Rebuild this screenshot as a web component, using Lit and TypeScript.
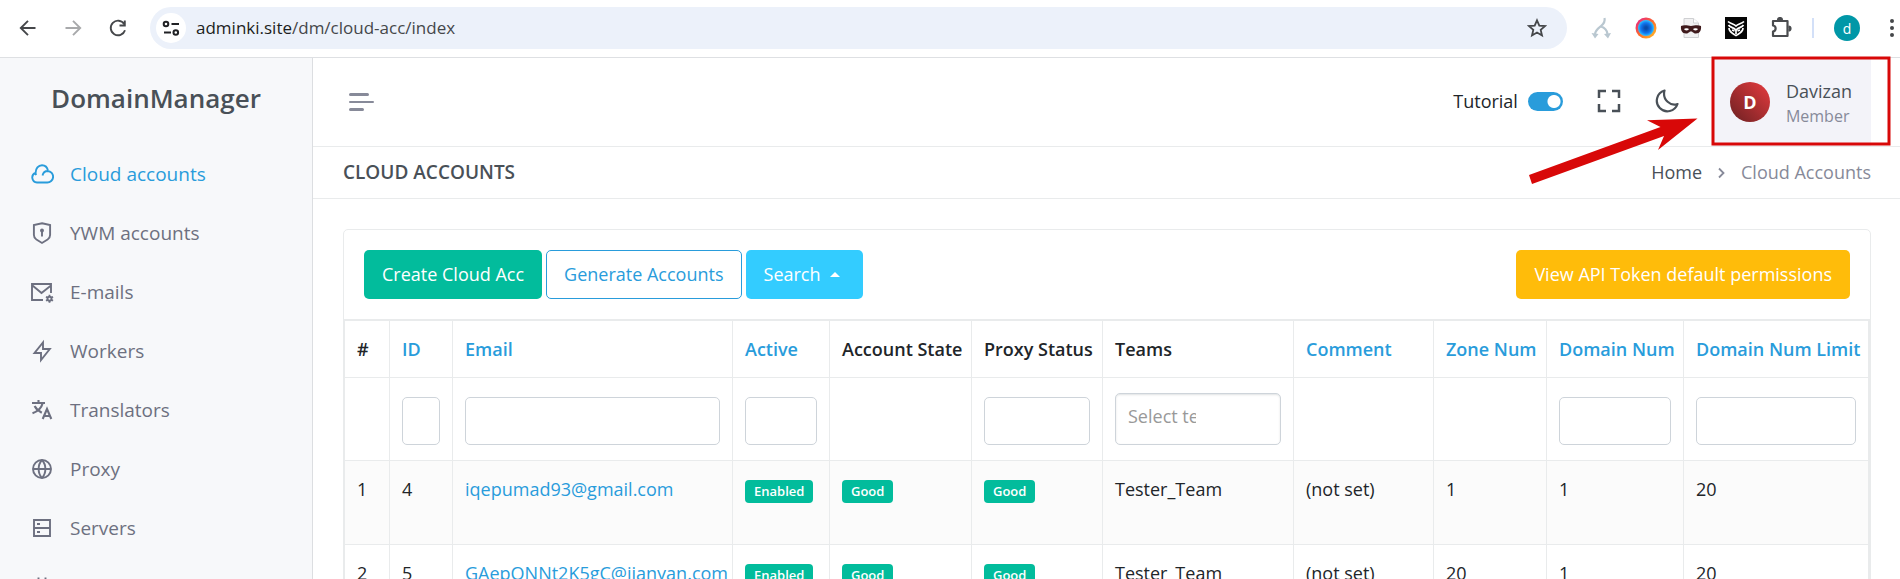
import { LitElement, html, css, svg } from "lit";
import { customElement } from "lit/decorators.js";

interface Column {
  label: string;
  width?: number;
  sortable?: boolean;
  filter?: "text" | "teams";
}

const COLUMNS: Column[] = [
  { label: "#", width: 45 },
  { label: "ID", width: 63, sortable: true, filter: "text" },
  { label: "Email", width: 280, sortable: true, filter: "text" },
  { label: "Active", width: 97, sortable: true, filter: "text" },
  { label: "Account State", width: 142 },
  { label: "Proxy Status", width: 131, filter: "text" },
  { label: "Teams", width: 191, filter: "teams" },
  { label: "Comment", width: 140, sortable: true },
  { label: "Zone Num", width: 113, sortable: true },
  { label: "Domain Num", width: 137, sortable: true, filter: "text" },
  { label: "Domain Num Limit", width: 185, sortable: true, filter: "text" },
  { label: "" },
];

const ROWS = [
  { n: 1, id: 4, email: "iqepumad93@gmail.com", team: "Tester_Team", comment: "(not set)", zones: 1, domains: 1, limit: 20 },
  { n: 2, id: 5, email: "GAepONNt2K5gC@jianyan.com", team: "Tester_Team", comment: "(not set)", zones: 20, domains: 1, limit: 20 },
];

const stroke = (body: unknown) => html`<svg class="icon" viewBox="0 0 24 24" width="24" height="24" fill="none" stroke="currentColor" stroke-width="1.900" aria-hidden="true">${body}</svg>`;

const MENU = [
  { label: "Cloud accounts", active: true, icon: svg`<path d="M12.500 13.500c.6-2.600 2.600-4.500 5.200-4.500A5.300 5.300 0 0 1 17 20.500H7A5 5 0 0 1 5.600 10.800C5.600 6.500 8.300 3.200 12 3.200c3 0 5.300 2 5.900 5.300M5.600 10.800c0 1 .1 1.500.5 2.300"/>` },
  { label: "YWM accounts", icon: svg`<path d="M12 2.200 20.100 4v10c0 2-1 3.500-2.500 4.500L12 22l-5.600-3.500C4.900 17.500 3.900 16 3.900 14V4z"/><path d="M12 9.500V15.500"/><circle cx="12" cy="9.500" r="1.200" fill="currentColor" stroke-width="1.500"/>` },
  { label: "E-mails", icon: svg`<path d="M13 20H2V4h19v9M2.500 5.500l9 7.500L21 5.500"/><circle cx="19.500" cy="18.800" r="2"/><path stroke-width="1.800" d="M19.500 14.800v2M19.500 20.800v2M16 16.800l1.700 1M21.300 19.800l1.700 1M16 20.800l1.700-1M21.300 17.800l1.700-1"/>` },
  { label: "Workers", icon: svg`<path d="M13 10h6.800L11 21v-7H4.500L13 3.500z"/>` },
  { label: "Translators", icon: svg`<path stroke-width="2.100" d="M2 5h13M8.500 2v3M12.700 5C11.500 10 7.500 13.500 2.500 15.300M4.600 8c1.500 3 4 5 7.200 6.700M12.700 21 17 11l4.300 10M14 18h6"/>` },
  { label: "Proxy", icon: svg`<circle cx="12" cy="12" r="9"/><path d="M3 12h18M12 3c-4.500 5-4.500 13 0 18M12 3c4.500 5 4.500 13 0 18"/>` },
  { label: "Servers", icon: svg`<path d="M4 4h16v16H4zM4 12h16M7 8h3M7 16h3"/>` },
  { label: "Crawlers", icon: svg`<path d="M8.500 2.500v1.500l2 2h3l2-2V2.500M6 11a6 5.500 0 0 1 12 0v4a6 6 0 0 1-12 0zM12 13v8M2 13h4M18 13h4"/>` },
];

@customElement("app-root")
export class AppRoot extends LitElement {
  static styles = css`
    :host {
      --blue: #299cdb;
      --line: #e9ebec;
      --muted: #878a99;
      --dark: #495057;
      display: flex;
      flex-direction: column;
      height: 100vh;
      overflow: hidden;
      background: #fff;
      color: #212529;
      font: 400 18px/27px "Open Sans", "Noto Sans", sans-serif;
    }
    * { box-sizing: border-box; }
    a { color: inherit; text-decoration: none; }
    button { font: inherit; color: inherit; background: none; border: 0; padding: 0; cursor: pointer; }
    svg { display: block; flex: none; }

    .browser {
      display: flex;
      align-items: center;
      flex: none;
      height: 58px;
      padding: 0 4px 2px 16px;
      border-bottom: 1px solid #dee0e3;
      color: #45474a;
    }
    .nav { display: flex; gap: 21px; margin-right: 20px; }
    .forward { color: #a8a9ab; }
    .address {
      display: flex;
      align-items: center;
      flex: 1;
      height: 42px;
      padding: 0 20px 0 6px;
      border-radius: 21px;
      background: #ecf1fa;
    }
    .site-info {
      display: grid;
      place-items: center;
      width: 30px;
      height: 30px;
      margin-right: 10px;
      border-radius: 50%;
      background: #fff;
    }
    .url { flex: 1; min-width: 0; font-size: 17px; color: #45474a; }
    .url b { font-weight: 400; color: #1c1e21; }
    .extensions { display: flex; align-items: center; gap: 23px; margin-left: 23px; }
    .divider { width: 2px; height: 20px; margin: 0 20px; background: #d3e0f8; }
    .profile {
      display: grid;
      place-items: center;
      width: 26px;
      height: 26px;
      margin-right: 28px;
      border-radius: 50%;
      background: #0097a7;
      color: #fff;
      font-size: 14px;
    }

    .app { display: flex; flex: 1; min-height: 0; }
    .sidebar {
      flex: none;
      width: 313px;
      overflow: hidden;
      background: #f7f8fa;
      border-right: 1px solid #dcdee1;
    }
    .brand {
      display: block;
      padding: 20px 0 27px;
      text-align: center;
      font-size: 26px;
      line-height: 40px;
      font-weight: 600;
      color: var(--dark);
    }
    .menu { list-style: none; margin: 0; padding: 0; }
    .menu a {
      display: flex;
      align-items: center;
      gap: 16px;
      height: 59px;
      padding: 0 30px;
      font-size: 19px;
      color: #6d7080;
    }
    .menu a.active { color: var(--blue); }
    .menu .icon { margin-bottom: 2px; }

    .main { flex: 1; min-width: 0; }
    .topbar {
      display: flex;
      align-items: center;
      justify-content: space-between;
      height: 89px;
      padding: 0 29px 0 36px;
      border-bottom: 1px solid var(--line);
    }
    .hamburger { color: var(--muted); }
    .right { display: flex; align-items: center; }
    .tools { display: flex; align-items: center; gap: 34px; padding: 0 34px 2px 0; }
    .tutorial { display: flex; align-items: center; gap: 10px; }
    .switch {
      appearance: none;
      width: 35px;
      height: 19px;
      margin: 0;
      border-radius: 10px;
      background: radial-gradient(circle at 26px 50%, #fff 6px, transparent 7px) var(--blue);
    }
    .tool { color: var(--dark); }
    .user {
      display: flex;
      align-items: center;
      gap: 16px;
      height: 88px;
      padding: 0 19px 0 17px;
      background: #f3f3f9;
      text-align: left;
    }
    .avatar {
      display: grid;
      place-items: center;
      width: 40px;
      height: 40px;
      border-radius: 50%;
      background: linear-gradient(45deg, #6b2022, #e73b3f);
      color: #fff;
      font-weight: 700;
    }
    .who { display: flex; flex-direction: column; padding-top: 3px; line-height: 25px; color: var(--dark); }
    .role { font-size: 16px; color: var(--muted); }

    .titlebar {
      display: flex;
      align-items: center;
      justify-content: space-between;
      height: 52px;
      padding: 0 29px 0 30px;
      border-bottom: 1px solid var(--line);
    }
    h1 { margin: 0; font-size: 19px; line-height: 27px; font-weight: 600; color: var(--dark); }
    .crumbs { display: flex; align-items: center; gap: 14px; color: var(--dark); }
    .crumbs .here { color: var(--muted); }

    .content { padding: 30px 29px 30px 30px; }
    .card { border: 1px solid var(--line); border-radius: 5px 5px 0 0; }
    .actions { display: flex; align-items: center; gap: 4px; padding: 20px; height: 89px; }
    .btn {
      height: 49px;
      padding: 0 17px;
      border: 1px solid transparent;
      border-radius: 5px;
      color: #fff;
      font-weight: 500;
      white-space: nowrap;
    }
    .create { background: #02bc9c; }
    .outline { border-color: var(--blue); color: var(--blue); background: #fff; }
    .search { display: flex; align-items: center; gap: 9px; padding-right: 22px; background: #33ccff; }
    .caret { border: 5px solid transparent; border-top: 0; border-bottom-color: #fff; }
    .warn { margin-left: auto; background: #ffbc0a; }

    .scroller { overflow-x: auto; border-top: 1px solid var(--line); }
    table { width: 100%; min-width: 1526px; table-layout: fixed; border-collapse: collapse; }
    th, td { padding: 15px 12px 14px; border: 1px solid var(--line); text-align: left; vertical-align: top; white-space: nowrap; }
    th:last-child, td:last-child { padding: 0; }
    th { font-weight: 600; }
    th a, td a { color: var(--blue); }
    .filters td { height: 83px; vertical-align: middle; padding-bottom: 15px; }
    .field {
      display: block;
      width: 100%;
      height: 48px;
      margin-top: 4px;
      padding: 0 12px;
      border: 1px solid #ced4da;
      border-radius: 5px;
      background: #fff;
      font: inherit;
    }
    .teams {
      display: block;
      height: 52px;
      border: 1px solid #ced4da;
      border-radius: 5px;
      box-shadow: inset 0 1px 2px rgba(56, 65, 74, 0.15);
      padding: 9px 0 0 12px;
    }
    .teams input { display: block; width: 68px; height: 27px; padding: 0; border: 0; background: none; font: inherit; }
    .teams input::placeholder { color: #999; opacity: 1; }
    .data td { height: 84px; }
    .data tr:nth-child(odd) { background: #fbfbfb; }
    .badge {
      display: inline-block;
      padding: 0 9px;
      margin-top: 4px;
      border-radius: 4px;
      background: #02bc9c;
      color: #fff;
      font-size: 13px;
      line-height: 23px;
      font-weight: 600;
      vertical-align: top;
    }

    .callout { position: absolute; left: 1524px; top: 52px; pointer-events: none; }
  `;

  private badge(text: string) {
    return html`<span class="badge">${text}</span>`;
  }

  private browserBar() {
    return html`<header class="browser">
      <div class="nav">
        <button aria-label="Back">${stroke(svg`<path d="M19.500 12H5M12 4.800 4.800 12l7.200 7.200"/>`)}</button>
        <button class="forward" aria-label="Forward">${stroke(svg`<path d="M4.500 12H19M12 4.800l7.200 7.200-7.200 7.200"/>`)}</button>
        <button aria-label="Reload">${stroke(svg`<path d="M18.200 8A7.300 7.300 0 1 0 19 14.200M18.800 4.500V9.500H13.500"/>`)}</button>
      </div>
      <div class="address">
        <span class="site-info"><svg width="18" height="16" viewBox="0 0 18 16" fill="none" stroke="#202124" stroke-width="2"><circle cx="4" cy="4" r="2.300"/><path d="M9.500 4H17M2 12.500h7"/><circle cx="13.800" cy="12.500" r="2.300"/></svg></span>
        <span class="url"><b>adminki.site</b>/dm/cloud-acc/index</span>
        <button aria-label="Bookmark"><svg width="20" height="20" viewBox="0 0 20 20" fill="none" stroke="#45474a" stroke-width="1.800"><path d="m10 2.300 2.300 5.300 5.700.5-4.300 3.800 1.300 5.600-5-3-5 3 1.300-5.600L2 8.100l5.700-.5z"/></svg></button>
      </div>
      <div class="extensions">
        <svg width="22" height="22" viewBox="0 0 22 22" fill="none" stroke="#b9c7d0" stroke-width="2.200"><path d="M14.500 1c.8 3.500-.3 5.500-3.500 8S5.500 13 5 17M11 9.500c4.500 1.500 6 3.500 6.500 7.500"/><path fill="#b9c7d0" stroke="none" d="m1.500 16 7 1-3.500 4.500zM21 16l-7 1 4 4.500z"/></svg>
        <svg width="22" height="22" viewBox="0 0 22 22"><defs><linearGradient id="ring" x1="0" y1="0" x2="1" y2="1"><stop offset="0" stop-color="#e0189a"/><stop offset=".5" stop-color="#ff6a2a"/><stop offset="1" stop-color="#ffc629"/></linearGradient><radialGradient id="eye"><stop offset=".15" stop-color="#0a4aa8"/><stop offset=".65" stop-color="#1176f0"/><stop offset="1" stop-color="#2fc4ff"/></radialGradient></defs><circle cx="11" cy="11" r="10.500" fill="url(#ring)"/><circle cx="11" cy="11" r="8" fill="url(#eye)"/></svg>
        <svg width="22" height="22" viewBox="0 0 22 22"><path d="M4 1.500h9.500L18.500 6v14.500H4z" fill="#f1f1f2" stroke="#cfd0d2"/><path d="M13.500 1.500V6h5" fill="#fff" stroke="#cfd0d2"/><path d="M1 9c3-1.500 7-.5 10 0 3-.5 7-1.500 10 0 .5 4-1 7.500-5 7.500-3 0-3-2-5-2s-2 2-5 2C2 16.500.5 13 1 9z" fill="#3f1a1c"/><ellipse cx="6.500" cy="12.300" rx="2.300" ry="1.100" fill="#fff"/><ellipse cx="15.500" cy="12.300" rx="2.300" ry="1.100" fill="#fff"/></svg>
        <svg width="22" height="22" viewBox="0 0 22 22"><path d="M0 0h22v22H0z" fill="#050505"/><g fill="none" stroke="#fff" stroke-width="1.700"><path d="M3 4.500c2.500 2.500 6 2 8 4.500 2-2.500 5.500-2 8-4.500M3.500 8c1.500 2.500 4.500 2 7.500 5 3-3 6-2.500 7.500-5M4 11c0 4 3 5 7 7.500 4-2.500 7-3.500 7-7.500"/><path d="m7 13 2.500 1M15 13l-2.500 1M11 13v4"/></g></svg>
        <svg width="22" height="22" viewBox="0 0 22 22" fill="none" stroke="#4a4c4f" stroke-width="2.200"><path d="M3 4h14.500v15H3v-4.500c3.500-.5 3.500-5.500 0-6z" stroke-linejoin="round"/><path d="M8 3a2 2 0 0 1 4 0M18.500 9.500a2 2 0 0 1 0 4" fill="#4a4c4f"/></svg>
      </div>
      <span class="divider"></span>
      <span class="profile">d</span>
      <button aria-label="Browser menu"><svg width="8" height="22" viewBox="0 0 8 22" fill="#45474a"><circle cx="4" cy="4" r="2"/><circle cx="4" cy="11" r="2"/><circle cx="4" cy="18" r="2"/></svg></button>
    </header>`;
  }

  private filterCell(c: Column) {
    if (c.filter === "text") return html`<input class="field" type="text" aria-label=${c.label} />`;
    if (c.filter === "teams") return html`<label class="teams"><input type="text" placeholder="Select teams" aria-label="Teams" /></label>`;
    return null;
  }

  render() {
    return html`${this.browserBar()}
      <div class="app">
        <nav class="sidebar">
          <a class="brand" href="#">DomainManager</a>
          <ul class="menu">
            ${MENU.map((m) => html`<li><a href="#" class=${m.active ? "active" : ""}>${stroke(m.icon)}<span>${m.label}</span></a></li>`)}
          </ul>
        </nav>
        <main class="main">
          <div class="topbar">
            <button class="hamburger" aria-label="Toggle menu"><svg width="25" height="18" viewBox="0 0 25 18" fill="none" stroke="currentColor" stroke-linecap="round"><path stroke-width="3" d="M1.500 1.500h17M1.500 16.500h12"/><path stroke-width="2" d="M1 9h23"/></svg></button>
            <div class="right">
              <div class="tools">
                <label class="tutorial">Tutorial <input class="switch" type="checkbox" role="switch" checked /></label>
                <button class="tool" aria-label="Fullscreen"><svg width="24" height="24" viewBox="0 0 24 24" fill="none" stroke="currentColor" stroke-width="2.500"><path d="M2 9V2h7M15 2h7v7M22 15v7h-7M9 22H2v-7"/></svg></button>
                <button class="tool" aria-label="Dark mode"><svg width="24" height="24" viewBox="0 0 24 24" fill="none" stroke="currentColor" stroke-width="2.200" stroke-linejoin="round"><path d="M9.500 1.500A10.600 10.600 0 1 0 22.500 15C16 17.500 7 11 9.500 1.500z"/></svg></button>
              </div>
              <button class="user">
                <span class="avatar">D</span>
                <span class="who"><span>Davizan</span><span class="role">Member</span></span>
              </button>
            </div>
          </div>
          <div class="titlebar">
            <h1>CLOUD ACCOUNTS</h1>
            <nav class="crumbs">
              <a href="#">Home</a>
              <svg width="11" height="12" viewBox="0 0 11 12" fill="none" stroke="#878a99" stroke-width="1.800"><path d="m3 1.500 4.500 4.500L3 10.500"/></svg>
              <span class="here">Cloud Accounts</span>
            </nav>
          </div>
          <div class="content">
            <section class="card">
              <div class="actions">
                <button class="btn create">Create Cloud Acc</button>
                <button class="btn outline">Generate Accounts</button>
                <button class="btn search">Search <span class="caret"></span></button>
                <button class="btn warn">View API Token default permissions</button>
              </div>
              <div class="scroller">
                <table>
                  <colgroup>${COLUMNS.map((c) => (c.width ? html`<col style="width:${c.width}px" />` : html`<col />`))}</colgroup>
                  <thead>
                    <tr>${COLUMNS.map((c) => html`<th>${c.sortable ? html`<a href="#">${c.label}</a>` : c.label}</th>`)}</tr>
                    <tr class="filters">${COLUMNS.map((c) => html`<td>${this.filterCell(c)}</td>`)}</tr>
                  </thead>
                  <tbody class="data">
                    ${ROWS.map((r) => html`<tr>
                      <td>${r.n}</td><td>${r.id}</td><td><a href="#">${r.email}</a></td>
                      <td>${this.badge("Enabled")}</td><td>${this.badge("Good")}</td><td>${this.badge("Good")}</td>
                      <td>${r.team}</td><td>${r.comment}</td><td>${r.zones}</td><td>${r.domains}</td><td>${r.limit}</td><td></td>
                    </tr>`)}
                  </tbody>
                </table>
              </div>
            </section>
          </div>
        </main>
      </div>
      <svg class="callout" width="372" height="136" viewBox="1524 52 372 136" aria-hidden="true">
        <rect x="1713" y="58" width="176" height="86" fill="none" stroke="#d80808" stroke-width="3"/>
        <path fill="#d80808" d="M1529 175 1660.500 127 1647 120.300 1697.500 118.500 1658 150 1664 136 1532 184z"/>
      </svg>`;
  }
}
